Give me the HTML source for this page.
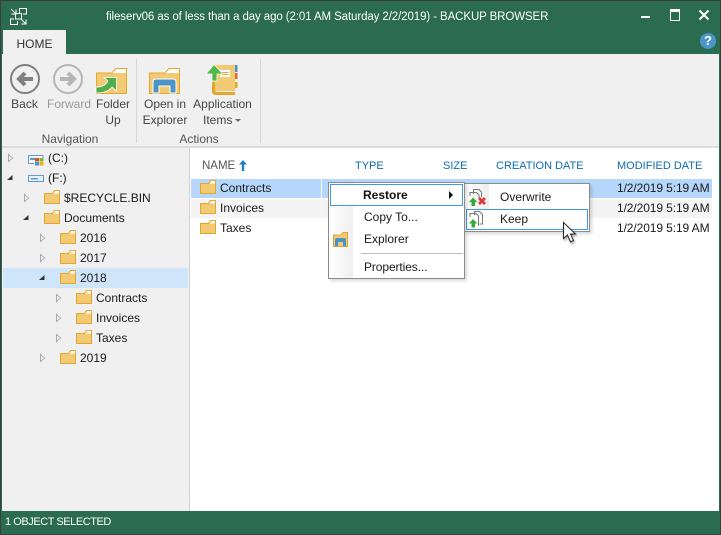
<!DOCTYPE html>
<html><head><meta charset="utf-8">
<style>
html,body{margin:0;padding:0;background:#fff}
#w{position:relative;width:721px;height:535px;overflow:hidden;background:#fff;font:12px "Liberation Sans",sans-serif;color:#1a1a1a}
.a{position:absolute}
.t{position:absolute;white-space:nowrap;line-height:14px}
.c{text-align:center}
.h{color:#0e6cb0;font-size:11px}
svg{position:absolute;overflow:visible}
</style></head><body>
<svg width="0" height="0" style="position:absolute">
<defs>
<g id="f"><path d="M.5 3.500H8.500L10.500 .5H15.500V13.500H.5Z" fill="#f3ca74" stroke="#e3a72f"/><path d="M9.500 3.500L11.300 1H15V3.500Z" fill="#fff"/></g>
<path id="o" d="M.5.500L4.500 4 .5 7.500Z" fill="#fff" stroke="#a8a8a8"/>
<path id="d" d="M0 5L5.500 0V5Z" fill="#333"/>
</defs></svg>
<div id="w">
<div class="a" style="left:0;top:0;width:721px;height:54px;background:#2b6b4f"></div>
<div class="a" style="left:0;top:54px;width:2px;height:481px;background:#2b6b4f"></div>
<div class="a" style="left:719px;top:54px;width:2px;height:481px;background:#2b6b4f"></div>

<svg style="left:10px;top:8px" width="17" height="17" fill="none" stroke="#fff" stroke-width="1"><path d="M1 1L6 6M6 1.500V6H1.500M11 11L16 16M16 11.500V16H11.500"/><path d="M9.500 5V.5H16.500V6H13"/><path d="M4 11H.5V16.500H7.500V13"/><rect x="5.500" y="5.500" width="6" height="5.500"/></svg>
<div class="t" style="left:106px;top:10px;color:#fff;font-size:11.500px;letter-spacing:-.1px">fileserv06 as of less than a day ago (2:01 AM Saturday 2/2/2019) - BACKUP BROWSER</div>
<div class="a" style="left:641px;top:16px;width:9px;height:2px;background:#fff"></div>
<div class="a" style="left:670px;top:9px;width:8px;height:8px;border:1px solid #fff;border-top-width:3px"></div>
<svg style="left:699px;top:10px" width="10" height="10"><path d="M.5.500L9.500 9.500M9.500 .5L.5 9.500" stroke="#fff" stroke-width="2"/></svg>
<div class="a c" style="left:700px;top:33px;width:16px;height:16px;border-radius:8px;background:#4a94c8;color:#fff;font:bold 13px/16px 'Liberation Sans',sans-serif">?</div>

<div class="a" style="left:3px;top:30px;width:63px;height:24px;background:#f0f0f0"></div>
<div class="t c" style="left:3px;top:37px;width:63px;color:#333">HOME</div>

<div class="a" style="left:2px;top:54px;width:717px;height:92px;background:#f0f0f0"></div>
<div class="a" style="left:2px;top:146px;width:717px;height:2px;background:#dcdcdc"></div>
<div class="a" style="left:136px;top:59px;width:1px;height:84px;background:#d6d6d6"></div>
<div class="a" style="left:260px;top:59px;width:1px;height:84px;background:#d6d6d6"></div>

<svg style="left:10px;top:64px" width="30" height="30"><circle cx="15" cy="15" r="14" fill="none" stroke="#808080" stroke-width="2"/><path d="M23 15H9M15 9L9 15 15 21" fill="none" stroke="#808080" stroke-width="4"/></svg>
<svg style="left:53px;top:64px" width="30" height="30"><circle cx="15" cy="15" r="14" fill="none" stroke="#b5b5b5" stroke-width="2"/><path d="M7 15H21M15 9L21 15 15 21" fill="none" stroke="#b5b5b5" stroke-width="4"/></svg>
<svg style="left:96px;top:68px" width="32" height="26"><path d="M.5 5H16L20 .5H30.500V25.500H.5Z" fill="#f3ca74" stroke="#e3a72f"/><path d="M16.500 5L20.500 1H30V5Z" fill="#fff"/><path d="M0 19C8 19 10 16 12 13L8 9.500H20.500V23L16 19C13 23 8 25 0 25Z" fill="#4caf4a" stroke="#fff" stroke-width=".8"/></svg>
<svg style="left:149px;top:68px" width="32" height="26"><path d="M.5 5H16L20 .5H30.500V25.500H.5Z" fill="#f3ca74" stroke="#e3a72f"/><path d="M16.500 5L20.500 1H30V5Z" fill="#fff"/><path d="M4 25V14Q4 11 7 11H24Q27 11 27 14V25H21V18H10V25Z" fill="#4a94c8" stroke="#fff"/></svg>
<svg style="left:205px;top:64px" width="32" height="32"><path d="M7 1H30V27H12Q7 27 7 30Z" fill="#f3ca74"/><path d="M7 18V27Q7 31 11 31H30V28H12Q10 28 10 26V18Z" fill="#e3a72f"/><rect x="30" y="1" width="2.500" height="7" fill="#4a94c8"/><rect x="30" y="9" width="2.500" height="6" fill="#d9683a"/><rect x="30" y="18" width="2.500" height="6" fill="#e3a72f"/><rect x="15" y="6" width="10" height="7" fill="#fff"/><path d="M16.500 8.500h7M16.500 10.500h7" stroke="#e3a72f"/><path d="M9 .5L1 10H7V17H12V10H18Z" fill="#4fb848" stroke="#fff" stroke-width=".7"/></svg>

<div class="t c" style="left:4px;top:97px;width:41px;color:#444">Back</div>
<div class="t c" style="left:45px;top:97px;width:48px;color:#999">Forward</div>
<div class="t c" style="left:92px;top:97px;width:42px;color:#444">Folder</div>
<div class="t c" style="left:92px;top:113px;width:42px;color:#444">Up</div>
<div class="t c" style="left:140px;top:97px;width:50px;color:#444">Open in</div>
<div class="t c" style="left:140px;top:113px;width:50px;color:#444">Explorer</div>
<div class="t c" style="left:189px;top:97px;width:67px;color:#444">Application</div>
<div class="t" style="left:203px;top:113px;color:#444">Items</div>
<div class="a" style="left:235px;top:119px;border:3px solid transparent;border-top:3px solid #666"></div>
<div class="t c" style="left:20px;top:132px;width:100px;color:#555">Navigation</div>
<div class="t c" style="left:149px;top:132px;width:100px;color:#555">Actions</div>

<div class="a" style="left:2px;top:148px;width:187px;height:364px;background:#f0f0f0"></div>
<div class="a" style="left:189px;top:148px;width:1px;height:364px;background:#d0d0d0"></div>
<div class="a" style="left:3px;top:268px;width:185px;height:20px;background:#cfe5f9"></div>

<svg style="left:8px;top:154px" width="5" height="8"><use href="#o"/></svg>
<svg style="left:7px;top:175px" width="6" height="6"><use href="#d"/></svg>
<svg style="left:28px;top:155px" width="17" height="11"><path d="M.5.500H15V3M.5.500V8.500H6" fill="#fff" stroke="#5f9bd0"/><rect x="2" y="3" width="5" height="2" fill="#5f9bd0"/><rect x="7" y="3" width="4" height="3.500" fill="#e0502a"/><rect x="11.500" y="3" width="4" height="3.500" fill="#7cb82f"/><rect x="7" y="7" width="4" height="3.500" fill="#2f9fe0"/><rect x="11.500" y="7" width="4" height="3.500" fill="#f4b400"/></svg>
<svg style="left:28px;top:175px" width="17" height="7"><rect x=".5" y=".5" width="15" height="6" fill="#e8f1fa" stroke="#5f9bd0"/><rect x="3" y="3" width="7" height="1.500" fill="#5f9bd0"/></svg>
<div class="t" style="left:48px;top:151px">(C:)</div>
<div class="t" style="left:48px;top:171px">(F:)</div>

<svg style="left:24px;top:194px" width="5" height="8"><use href="#o"/></svg>
<svg style="left:44px;top:190px" width="16" height="14"><use href="#f"/></svg>
<div class="t" style="left:64px;top:191px">$RECYCLE.BIN</div>
<svg style="left:23px;top:215px" width="6" height="6"><use href="#d"/></svg>
<svg style="left:44px;top:210px" width="16" height="14"><use href="#f"/></svg>
<div class="t" style="left:64px;top:211px">Documents</div>

<svg style="left:40px;top:234px" width="5" height="8"><use href="#o"/></svg>
<svg style="left:60px;top:230px" width="16" height="14"><use href="#f"/></svg>
<div class="t" style="left:80px;top:231px">2016</div>
<svg style="left:40px;top:254px" width="5" height="8"><use href="#o"/></svg>
<svg style="left:60px;top:250px" width="16" height="14"><use href="#f"/></svg>
<div class="t" style="left:80px;top:251px">2017</div>
<svg style="left:39px;top:275px" width="6" height="6"><use href="#d"/></svg>
<svg style="left:60px;top:270px" width="16" height="14"><use href="#f"/></svg>
<div class="t" style="left:80px;top:271px">2018</div>

<svg style="left:56px;top:294px" width="5" height="8"><use href="#o"/></svg>
<svg style="left:76px;top:290px" width="16" height="14"><use href="#f"/></svg>
<div class="t" style="left:96px;top:291px">Contracts</div>
<svg style="left:56px;top:314px" width="5" height="8"><use href="#o"/></svg>
<svg style="left:76px;top:310px" width="16" height="14"><use href="#f"/></svg>
<div class="t" style="left:96px;top:311px">Invoices</div>
<svg style="left:56px;top:334px" width="5" height="8"><use href="#o"/></svg>
<svg style="left:76px;top:330px" width="16" height="14"><use href="#f"/></svg>
<div class="t" style="left:96px;top:331px">Taxes</div>
<svg style="left:40px;top:354px" width="5" height="8"><use href="#o"/></svg>
<svg style="left:60px;top:350px" width="16" height="14"><use href="#f"/></svg>
<div class="t" style="left:80px;top:351px">2019</div>

<div class="t" style="left:202px;top:159px;color:#555;font-size:11.500px">NAME</div>
<svg style="left:239px;top:160px" width="9" height="12"><path d="M4 0L8 4.500H5.200V11H2.800V4.500H0Z" fill="#1f7fc4"/></svg>
<div class="t h" style="left:355px;top:159px">TYPE</div>
<div class="t h" style="left:443px;top:159px">SIZE</div>
<div class="t h" style="left:496px;top:159px">CREATION DATE</div>
<div class="t h" style="left:617px;top:159px">MODIFIED DATE</div>

<div class="a" style="left:191px;top:179px;width:521px;height:19px;background:#b5d7fb"></div>
<div class="a" style="left:191px;top:199px;width:521px;height:19px;background:#f4f4f4"></div>
<div class="a" style="left:321px;top:179px;width:1px;height:19px;background:#fff"></div>

<svg style="left:200px;top:180px" width="16" height="14"><use href="#f"/></svg>
<div class="t" style="left:220px;top:181px">Contracts</div>
<svg style="left:200px;top:200px" width="16" height="14"><use href="#f"/></svg>
<div class="t" style="left:220px;top:201px">Invoices</div>
<svg style="left:200px;top:220px" width="16" height="14"><use href="#f"/></svg>
<div class="t" style="left:220px;top:221px">Taxes</div>
<div class="t" style="left:617px;top:181px;letter-spacing:-.1px">1/2/2019 5:19 AM</div>
<div class="t" style="left:617px;top:201px;letter-spacing:-.1px">1/2/2019 5:19 AM</div>
<div class="t" style="left:617px;top:221px;letter-spacing:-.1px">1/2/2019 5:19 AM</div>
<div class="t" style="left:496px;top:181px;letter-spacing:-.3px">1/1/2019 5:19 AM</div>
<div class="t" style="left:496px;top:221px;letter-spacing:-.3px">1/1/2019 5:19 AM</div>

<!-- submenu -->
<div class="a" style="left:464px;top:183px;width:124px;height:47px;background:#fff;border:1px solid #8c8c8c;box-shadow:2px 2px 3px rgba(0,0,0,.15)"></div>
<div class="a" style="left:465px;top:184px;width:24px;height:46px;background:linear-gradient(90deg,#fff,#eee)"></div>
<div class="a" style="left:466px;top:209px;width:120px;height:19px;border:1px solid #3d9be9;background:#fff"></div>
<svg style="left:469px;top:189px" width="18" height="17"><path d="M4.500 5V.5H10L12.500 3V8" fill="none" stroke="#777"/><path d="M1 7V3.500H7.500L10 6V9" fill="none" stroke="#777"/><path d="M4 8.500L8.500 13H6V17H2.500V13H0Z" fill="#34a93a"/><path d="M9 10L11 8l2 2 2-2 2 2-2 2 2 2-2 2-2-2-2 2-2-2 2-2Z" fill="#e23a3a"/></svg>
<svg style="left:469px;top:211px" width="18" height="17"><path d="M5.500 4V.5H10.500L13.500 3.500V13H10.500" fill="none" stroke="#777"/><path d="M1 6V2.500H7L9.500 5V15" fill="none" stroke="#777"/><path d="M4 8L8.500 12.500H6V16.500H2.500V12.500H0Z" fill="#34a93a"/></svg>
<div class="t" style="left:500px;top:190px">Overwrite</div>
<div class="t" style="left:500px;top:212px">Keep</div>

<!-- main menu -->
<div class="a" style="left:328px;top:182px;width:135px;height:95px;background:#fff;border:1px solid #8c8c8c;box-shadow:2px 2px 3px rgba(0,0,0,.15)"></div>
<div class="a" style="left:329px;top:183px;width:24px;height:95px;background:linear-gradient(90deg,#fff,#efefef)"></div>
<div class="a" style="left:330px;top:184px;width:131px;height:20px;border:1px solid #3d9be9;background:#fff"></div>
<div class="t" style="left:363px;top:188px;font-weight:bold;color:#111">Restore</div>
<div class="a" style="left:449px;top:191px;border:4px solid transparent;border-left:4px solid #111;border-right:0"></div>
<div class="t" style="left:364px;top:210px">Copy To...</div>
<div class="t" style="left:364px;top:232px">Explorer</div>
<div class="a" style="left:361px;top:253px;width:102px;height:1px;background:#bcbcbc"></div>
<div class="t" style="left:364px;top:260px;letter-spacing:-.1px">Properties...</div>
<svg style="left:333px;top:232px" width="15" height="15"><path d="M.5 3H8L10 .5H14.500V14.500H.5Z" fill="#f3ca74" stroke="#e3a72f"/><path d="M2 14.500V8Q2 6 4 6H11Q13 6 13 8V14.500H10V10H5V14.500Z" fill="#4a94c8"/></svg>

<!-- cursor -->
<svg style="left:563px;top:222px" width="16" height="22"><path d="M.5.500V16.500L4.500 13 7.500 20 10.500 18.500 7.500 12H12.500Z" fill="#fff" stroke="#222" style="filter:drop-shadow(1px 2px 1px rgba(0,0,0,.3))"/></svg>

<div class="a" style="left:0;top:511px;width:721px;height:24px;background:#2b6b4f"></div>
<div class="t" style="left:5px;top:515px;color:#fff;font-size:11px;letter-spacing:-.45px">1 OBJECT SELECTED</div>
<div class="a" style="left:0;top:0;width:721px;height:1px;background:#3a3f3d"></div>
<div class="a" style="left:0;top:534px;width:721px;height:1px;background:#3a3f3d"></div>
<div class="a" style="left:0;top:0;width:1px;height:535px;background:#3a3f3d"></div>
<div class="a" style="left:720px;top:0;width:1px;height:535px;background:#3a3f3d"></div>
</div>
</body></html>
